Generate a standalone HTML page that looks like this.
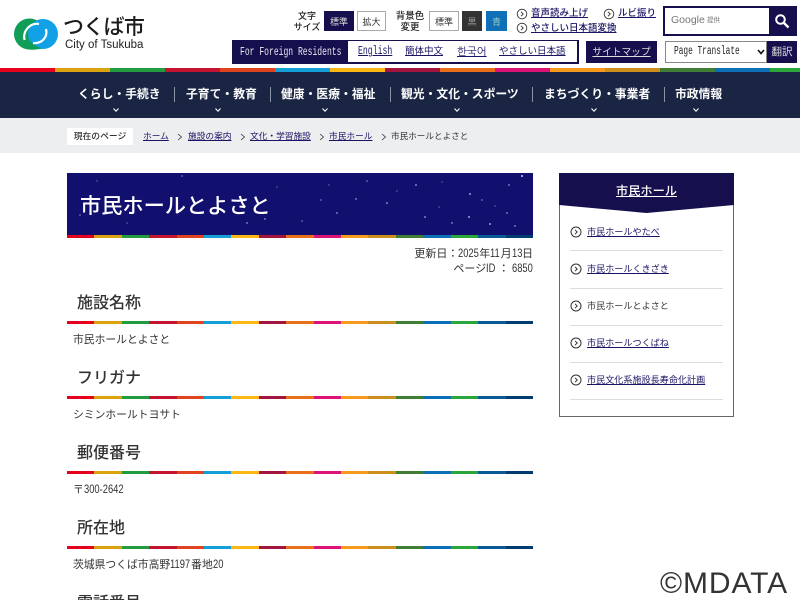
<!DOCTYPE html>
<html lang="ja"><head><meta charset="utf-8"><title>市民ホールとよさと</title>
<style>
*{box-sizing:border-box;margin:0;padding:0}
html,body{width:800px;height:600px;overflow:hidden;background:#fff}
body{position:relative;font-family:"Liberation Sans","Noto Sans CJK JP",sans-serif;color:#333}
.a{position:absolute;white-space:nowrap}
a,.u{color:#1a1464;text-decoration:underline}
.btn{position:absolute;display:flex;align-items:center;justify-content:center;font-size:9px;border:1px solid #aaa;background:#fff;color:#333}
.rb{position:absolute;display:flex;overflow:hidden}
.rb i{flex:1;display:block}
.nav{position:absolute;top:86px;font-size:11.800px;font-weight:700;color:#fff;white-space:nowrap;line-height:17px}
.sep{position:absolute;top:87px;width:1px;height:15px;background:#8d93a6}
.ch{position:absolute;top:107px;width:6px;height:6px}
.bc{position:absolute;top:130px;font-size:8.700px;line-height:13px;white-space:nowrap}
.h2{position:absolute;left:77px;font-size:16px;line-height:22px;font-weight:500;color:#333;white-space:nowrap}
.p{position:absolute;left:73px;font-size:10.800px;line-height:16px;color:#333;white-space:nowrap}
.n{display:inline-block;font-size:12px;line-height:12px;transform:scaleX(.78);transform-origin:0 50%}
.m{position:absolute;white-space:nowrap;font-family:"Liberation Mono",monospace;transform-origin:0 50%}
.sl{position:absolute;left:587px;font-size:9.100px;line-height:13px;white-space:nowrap}
.hr{position:absolute;left:570px;width:153px;height:1px;background:#ddd}
svg{display:block}
</style></head><body>

<!-- logo -->
<svg class="a" style="left:12px;top:16px" width="48" height="36" viewBox="0 0 48 36">
<circle cx="17.500" cy="18" r="15.500" fill="#0f9d58"/>
<circle cx="31" cy="18" r="15" fill="#12a0e6"/>
<path d="M16 33.500C21 34 26 33.500 30 32.500C26 31 22 29 20 26L12 24Z" fill="#0f9d58"/>
<path d="M12.500 24C10.500 15 18 6.500 27 8" fill="none" stroke="#fff" stroke-width="2.200"/>
<path d="M34 13C36 21 30 28 21 27" fill="none" stroke="#fff" stroke-width="2.200"/>
</svg>
<div class="a" style="left:63px;top:14px;font-size:21px;line-height:28px;font-weight:500;color:#1c1c1c;letter-spacing:-.7px">つくば市</div>
<div class="a" style="left:65px;top:39px;font-size:11.500px;line-height:13px;font-weight:400;color:#222">City of Tsukuba</div>

<!-- text size / bg -->
<div class="a" style="left:290px;top:11px;width:34px;text-align:center;font-size:9px;line-height:11px;font-weight:500;color:#222">文字<br>サイズ</div>
<div class="btn" style="left:324px;top:11px;width:30px;height:20px;background:#15104d;color:#ddd;border-color:#15104d">標準</div>
<div class="btn" style="left:357px;top:11px;width:29px;height:20px">拡大</div>
<div class="a" style="left:393px;top:11px;width:34px;text-align:center;font-size:9.500px;line-height:11px;font-weight:500;color:#222">背景色<br>変更</div>
<div class="btn" style="left:429px;top:11px;width:30px;height:20px">標準</div>
<div class="btn" style="left:462px;top:11px;width:20px;height:20px;background:#333;color:#999;border-color:#333">黒</div>
<div class="btn" style="left:486px;top:11px;width:21px;height:20px;background:#0f70b7;color:#9cc;border-color:#0f70b7">青</div>

<!-- circle links -->
<svg class="a" style="left:516px;top:8px" width="12" height="12" viewBox="0 0 12 12"><circle cx="6" cy="6" r="4.800" fill="none" stroke="#333" stroke-width=".9"/><path d="M5 3.800L7.200 6L5 8.200" fill="none" stroke="#333" stroke-width=".9"/></svg>
<a class="a" style="left:531px;top:7px;font-size:9.500px;line-height:13px;font-weight:500">音声読み上げ</a>
<svg class="a" style="left:603px;top:8px" width="12" height="12" viewBox="0 0 12 12"><circle cx="6" cy="6" r="4.800" fill="none" stroke="#333" stroke-width=".9"/><path d="M5 3.800L7.200 6L5 8.200" fill="none" stroke="#333" stroke-width=".9"/></svg>
<a class="a" style="left:618px;top:7px;font-size:9.500px;line-height:13px;font-weight:500">ルビ振り</a>
<svg class="a" style="left:516px;top:22px" width="12" height="12" viewBox="0 0 12 12"><circle cx="6" cy="6" r="4.800" fill="none" stroke="#333" stroke-width=".9"/><path d="M5 3.800L7.200 6L5 8.200" fill="none" stroke="#333" stroke-width=".9"/></svg>
<a class="a" style="left:531px;top:22px;font-size:9.500px;line-height:13px;font-weight:500">やさしい日本語変換</a>

<!-- search -->
<div class="a" style="left:663px;top:6px;width:134px;height:30px;border:2px solid #15104d;background:#fff"></div>
<div class="a" style="left:769px;top:6px;width:28px;height:30px;background:#15104d"></div>
<svg class="a" style="left:774px;top:13px" width="16" height="16" viewBox="0 0 16 16"><circle cx="6.500" cy="6.500" r="4.300" fill="none" stroke="#fff" stroke-width="2"/><path d="M10 10L14.500 14.500" stroke="#fff" stroke-width="2.400"/></svg>
<div class="a" style="left:671px;top:14px;font-size:10.500px;line-height:13px;color:#777">Google</div>
<div class="a" style="left:707px;top:16px;font-size:6.500px;line-height:10px;color:#777">提供</div>

<!-- foreign -->
<div class="a" style="left:232px;top:40px;width:347px;height:24px;border:1px solid #15104d;border-width:1px 2px 2px 1px;background:#fff"></div>
<div class="a" style="left:232px;top:40px;width:116px;height:24px;background:#15104d"></div>
<div class="m" style="left:240px;top:40px;font-size:11.500px;line-height:25px;color:#e8e8f0;transform:scaleX(.7)">For Foreign Residents</div>
<a class="m" style="left:358px;top:45px;font-size:11.500px;line-height:14px;color:#1a1464;transform:scaleX(.71)">English</a>
<a class="a" style="left:405px;top:45px;font-size:9.500px;line-height:14px">簡体中文</a>
<a class="a" style="left:457px;top:45px;font-family:'NanumGothic',sans-serif;font-size:10.500px;line-height:14px">한국어</a>
<a class="a" style="left:499px;top:45px;font-size:9.500px;line-height:14px">やさしい日本語</a>
<div class="a" style="left:586px;top:41px;width:71px;height:22px;background:#15104d;color:#ddd;font-size:9.700px;line-height:23px;text-align:center;text-decoration:underline">サイトマップ</div>
<div class="a" style="left:665px;top:41px;width:102px;height:22px;border:1px solid #888;background:#fff"></div>
<div class="m" style="left:674px;top:41px;font-size:11.500px;line-height:22px;color:#222;transform:scaleX(.68)">Page Translate</div>
<svg class="a" style="left:757px;top:49px" width="8" height="6" viewBox="0 0 8 6"><path d="M1 1L4 4.500L7 1" fill="none" stroke="#111" stroke-width="1.600"/></svg>
<div class="a" style="left:767px;top:41px;width:30px;height:22px;background:#15104d;color:#ddd;font-size:10.500px;line-height:22px;text-align:center">翻訳</div>

<!-- rainbow top -->
<div class="rb" style="left:0;top:68px;width:935px;height:4px"><i style="background:#e5001e"></i><i style="background:#d9a20e"></i><i style="background:#239b3f"></i><i style="background:#c5142f"></i><i style="background:#e0431f"></i><i style="background:#14a0d6"></i><i style="background:#fbb714"></i><i style="background:#a3153f"></i><i style="background:#ea6f1a"></i><i style="background:#dd1477"></i><i style="background:#f59a1c"></i><i style="background:#ce8e1b"></i><i style="background:#3f7e34"></i><i style="background:#0b70b5"></i><i style="background:#2aa63a"></i><i style="background:#0a5a96"></i><i style="background:#003b71"></i></div>

<!-- nav -->
<div class="a" style="left:0;top:72px;width:800px;height:46px;background:#1a2543"></div>
<div class="nav" style="left:78px">くらし・手続き</div>
<div class="sep" style="left:174px"></div>
<div class="nav" style="left:186px">子育て・教育</div>
<div class="sep" style="left:270px"></div>
<div class="nav" style="left:281px">健康・医療・福祉</div>
<div class="sep" style="left:390px"></div>
<div class="nav" style="left:401px">観光・文化・スポーツ</div>
<div class="sep" style="left:532px"></div>
<div class="nav" style="left:544px">まちづくり・事業者</div>
<div class="sep" style="left:664px"></div>
<div class="nav" style="left:675px">市政情報</div>
<svg class="ch" style="left:113px" viewBox="0 0 6 6"><path d="M.5 1.500L3 4.200L5.500 1.500" fill="none" stroke="#fff" stroke-width="1.100"/></svg>
<svg class="ch" style="left:215px" viewBox="0 0 6 6"><path d="M.5 1.500L3 4.200L5.500 1.500" fill="none" stroke="#fff" stroke-width="1.100"/></svg>
<svg class="ch" style="left:322px" viewBox="0 0 6 6"><path d="M.5 1.500L3 4.200L5.500 1.500" fill="none" stroke="#fff" stroke-width="1.100"/></svg>
<svg class="ch" style="left:454px" viewBox="0 0 6 6"><path d="M.5 1.500L3 4.200L5.500 1.500" fill="none" stroke="#fff" stroke-width="1.100"/></svg>
<svg class="ch" style="left:591px" viewBox="0 0 6 6"><path d="M.5 1.500L3 4.200L5.500 1.500" fill="none" stroke="#fff" stroke-width="1.100"/></svg>
<svg class="ch" style="left:693px" viewBox="0 0 6 6"><path d="M.5 1.500L3 4.200L5.500 1.500" fill="none" stroke="#fff" stroke-width="1.100"/></svg>

<!-- breadcrumb -->
<div class="a" style="left:0;top:118px;width:800px;height:35px;background:#eceeef"></div>
<div class="a" style="left:67px;top:128px;width:66px;height:17px;background:#fff;font-size:8.800px;line-height:17px;text-align:center;font-weight:500;color:#333">現在のページ</div>
<a class="bc" style="left:143px">ホーム</a>
<svg class="a" style="left:177px;top:133px" width="6" height="8" viewBox="0 0 6 8"><path d="M1 1L4.500 4L1 7" fill="none" stroke="#333" stroke-width=".8"/></svg>
<a class="bc" style="left:188px">施設の案内</a>
<svg class="a" style="left:240px;top:133px" width="6" height="8" viewBox="0 0 6 8"><path d="M1 1L4.500 4L1 7" fill="none" stroke="#333" stroke-width=".8"/></svg>
<a class="bc" style="left:250px">文化・学習施設</a>
<svg class="a" style="left:319px;top:133px" width="6" height="8" viewBox="0 0 6 8"><path d="M1 1L4.500 4L1 7" fill="none" stroke="#333" stroke-width=".8"/></svg>
<a class="bc" style="left:329px">市民ホール</a>
<svg class="a" style="left:381px;top:133px" width="6" height="8" viewBox="0 0 6 8"><path d="M1 1L4.500 4L1 7" fill="none" stroke="#333" stroke-width=".8"/></svg>
<div class="bc" style="left:391px;color:#333;font-size:8.600px">市民ホールとよさと</div>

<!-- title band -->
<div class="a" style="left:67px;top:173px;width:466px;height:65px;background:#12106e"></div>
<svg class="a" style="left:67px;top:173px" width="466" height="62" viewBox="0 0 466 62" fill="#c9cdf0">
<circle cx="349" cy="12" r=".8"/><circle cx="403" cy="21" r=".9"/><circle cx="289" cy="26" r=".7"/><circle cx="254" cy="27" r=".6"/><circle cx="300" cy="8" r=".6"/><circle cx="455" cy="3" r="1"/><circle cx="442" cy="12" r=".7"/><circle cx="320" cy="30" r=".8"/><circle cx="270" cy="40" r=".7"/><circle cx="358" cy="44" r=".8"/><circle cx="402" cy="44" r=".9"/><circle cx="415" cy="27" r=".6"/><circle cx="385" cy="50" r=".7"/><circle cx="423" cy="51" r=".9"/><circle cx="180" cy="50" r=".7"/><circle cx="198" cy="46" r=".7"/><circle cx="235" cy="48" r=".6"/><circle cx="115" cy="3" r=".6"/><circle cx="30" cy="8" r=".5"/><circle cx="13" cy="42" r=".6"/><circle cx="210" cy="14" r=".5"/><circle cx="440" cy="40" r=".7"/><circle cx="448" cy="53" r=".7"/><circle cx="330" cy="18" r=".5"/><circle cx="372" cy="34" r=".5"/><circle cx="262" cy="12" r=".5"/><circle cx="150" cy="40" r=".5"/><circle cx="60" cy="50" r=".5"/><circle cx="375" cy="9" r=".5"/><circle cx="428" cy="33" r=".5"/>
</svg>
<div class="a" style="left:80px;top:191px;font-size:21.200px;line-height:32px;font-weight:500;color:#fff">市民ホールとよさと</div>
<div class="rb" style="left:67px;top:235px;width:466px;height:3px"><i style="background:#e5001e"></i><i style="background:#d9a20e"></i><i style="background:#239b3f"></i><i style="background:#c5142f"></i><i style="background:#e0431f"></i><i style="background:#14a0d6"></i><i style="background:#fbb714"></i><i style="background:#a3153f"></i><i style="background:#ea6f1a"></i><i style="background:#dd1477"></i><i style="background:#f59a1c"></i><i style="background:#ce8e1b"></i><i style="background:#3f7e34"></i><i style="background:#0b70b5"></i><i style="background:#2aa63a"></i><i style="background:#0a5a96"></i><i style="background:#003b71"></i></div>

<div class="a" style="right:267px;top:247px;font-size:11px;line-height:15px;text-align:right;color:#333">更新日：<span class="n" style="width:20.800px">2025</span>年<span class="n" style="width:10.400px">11</span>月<span class="n" style="width:10.400px">13</span>日<br>ページ<span class="n" style="width:12px">ID</span>：<span class="n" style="width:3px"> </span><span class="n" style="width:20.800px">6850</span></div>

<!-- sections -->
<div class="h2" style="top:293px">施設名称</div>
<div class="rb" style="left:67px;top:321px;width:466px;height:3px"><i style="background:#e5001e"></i><i style="background:#d9a20e"></i><i style="background:#239b3f"></i><i style="background:#c5142f"></i><i style="background:#e0431f"></i><i style="background:#14a0d6"></i><i style="background:#fbb714"></i><i style="background:#a3153f"></i><i style="background:#ea6f1a"></i><i style="background:#dd1477"></i><i style="background:#f59a1c"></i><i style="background:#ce8e1b"></i><i style="background:#3f7e34"></i><i style="background:#0b70b5"></i><i style="background:#2aa63a"></i><i style="background:#0a5a96"></i><i style="background:#003b71"></i></div>
<div class="p" style="top:332px">市民ホールとよさと</div>

<div class="h2" style="top:368px">フリガナ</div>
<div class="rb" style="left:67px;top:396px;width:466px;height:3px"><i style="background:#e5001e"></i><i style="background:#d9a20e"></i><i style="background:#239b3f"></i><i style="background:#c5142f"></i><i style="background:#e0431f"></i><i style="background:#14a0d6"></i><i style="background:#fbb714"></i><i style="background:#a3153f"></i><i style="background:#ea6f1a"></i><i style="background:#dd1477"></i><i style="background:#f59a1c"></i><i style="background:#ce8e1b"></i><i style="background:#3f7e34"></i><i style="background:#0b70b5"></i><i style="background:#2aa63a"></i><i style="background:#0a5a96"></i><i style="background:#003b71"></i></div>
<div class="p" style="top:407px">シミンホールトヨサト</div>

<div class="h2" style="top:443px">郵便番号</div>
<div class="rb" style="left:67px;top:471px;width:466px;height:3px"><i style="background:#e5001e"></i><i style="background:#d9a20e"></i><i style="background:#239b3f"></i><i style="background:#c5142f"></i><i style="background:#e0431f"></i><i style="background:#14a0d6"></i><i style="background:#fbb714"></i><i style="background:#a3153f"></i><i style="background:#ea6f1a"></i><i style="background:#dd1477"></i><i style="background:#f59a1c"></i><i style="background:#ce8e1b"></i><i style="background:#3f7e34"></i><i style="background:#0b70b5"></i><i style="background:#2aa63a"></i><i style="background:#0a5a96"></i><i style="background:#003b71"></i></div>
<div class="p" style="top:482px">〒<span class="n" style="width:43px">300-2642</span></div>

<div class="h2" style="top:518px">所在地</div>
<div class="rb" style="left:67px;top:546px;width:466px;height:3px"><i style="background:#e5001e"></i><i style="background:#d9a20e"></i><i style="background:#239b3f"></i><i style="background:#c5142f"></i><i style="background:#e0431f"></i><i style="background:#14a0d6"></i><i style="background:#fbb714"></i><i style="background:#a3153f"></i><i style="background:#ea6f1a"></i><i style="background:#dd1477"></i><i style="background:#f59a1c"></i><i style="background:#ce8e1b"></i><i style="background:#3f7e34"></i><i style="background:#0b70b5"></i><i style="background:#2aa63a"></i><i style="background:#0a5a96"></i><i style="background:#003b71"></i></div>
<div class="p" style="top:557px">茨城県つくば市高野<span class="n" style="width:21px">1197</span>番地<span class="n" style="width:10.500px">20</span></div>

<div class="h2" style="top:593px">電話番号</div>

<!-- sidebar -->
<div class="a" style="left:559px;top:173px;width:175px;height:244px;border:1px solid #666;background:#fff"></div>
<svg class="a" style="left:559px;top:173px" width="175" height="40" viewBox="0 0 175 40"><path d="M0 0H175V32L87.500 40L0 32Z" fill="#15104d"/></svg>
<div class="a" style="left:559px;top:182px;width:175px;text-align:center;font-size:12.200px;line-height:18px;font-weight:500;color:#fff;text-decoration:underline">市民ホール</div>

<svg class="a" style="left:570px;top:226px" width="12" height="12" viewBox="0 0 12 12"><circle cx="6" cy="6" r="5" fill="none" stroke="#333"/><path d="M5 3.800L7.200 6L5 8.200" fill="none" stroke="#333"/></svg>
<a class="sl" style="top:226px">市民ホールやたべ</a>
<div class="hr" style="top:250px"></div>
<svg class="a" style="left:570px;top:263px" width="12" height="12" viewBox="0 0 12 12"><circle cx="6" cy="6" r="5" fill="none" stroke="#333"/><path d="M5 3.800L7.200 6L5 8.200" fill="none" stroke="#333"/></svg>
<a class="sl" style="top:263px">市民ホールくきざき</a>
<div class="hr" style="top:288px"></div>
<svg class="a" style="left:570px;top:300px" width="12" height="12" viewBox="0 0 12 12"><circle cx="6" cy="6" r="5" fill="none" stroke="#333"/><path d="M5 3.800L7.200 6L5 8.200" fill="none" stroke="#333"/></svg>
<div class="sl" style="top:300px;color:#333">市民ホールとよさと</div>
<div class="hr" style="top:325px"></div>
<svg class="a" style="left:570px;top:337px" width="12" height="12" viewBox="0 0 12 12"><circle cx="6" cy="6" r="5" fill="none" stroke="#333"/><path d="M5 3.800L7.200 6L5 8.200" fill="none" stroke="#333"/></svg>
<a class="sl" style="top:337px">市民ホールつくばね</a>
<div class="hr" style="top:362px"></div>
<svg class="a" style="left:570px;top:374px" width="12" height="12" viewBox="0 0 12 12"><circle cx="6" cy="6" r="5" fill="none" stroke="#333"/><path d="M5 3.800L7.200 6L5 8.200" fill="none" stroke="#333"/></svg>
<a class="sl" style="top:374px">市民文化系施設長寿命化計画</a>
<div class="hr" style="top:399px"></div>

<!-- watermark -->
<div class="a" style="left:660px;top:568px;font-size:30px;line-height:32px;letter-spacing:.9px;color:#333">©MDATA</div>
</body></html>
